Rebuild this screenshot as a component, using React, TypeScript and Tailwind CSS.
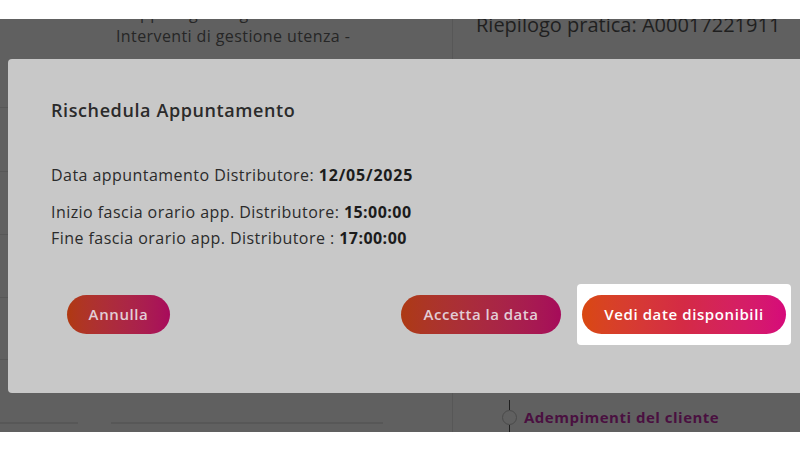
import React from "react";

const font = { fontFamily: "'Open Sans', 'Liberation Sans', sans-serif" };

const App: React.FC = () => {
  return (
    <div className="w-[800px] h-[450px] overflow-hidden bg-white flex flex-col" style={font}>
      {/* top white band */}
      <div className="h-[19px] bg-white shrink-0 relative z-10" />

      {/* dimmed page */}
      <div className="relative h-[413px] bg-[#606060] overflow-hidden flex">
        {/* left column */}
        <div className="w-[453px] shrink-0 border-r border-[#575757] flex flex-col">
          <div className="h-[89px] border-b border-[#575757] pl-[116px]">
            <p className="text-[16px] leading-[20px] -mt-[16px] tracking-[0.4px] text-[#262626]">Mappa ingressi gestione</p>
            <p className="text-[16px] leading-[20px] mt-[3px] tracking-[0.4px] text-[#262626]">Interventi di gestione utenza -</p>
          </div>
          <div className="h-[64px] border-b border-[#575757]" />
          <div className="h-[63px] border-b border-[#575757]" />
          <div className="h-[63px] border-b border-[#575757]" />
          <div className="h-[62px] border-b border-[#575757]" />
          <div className="flex-1 flex items-end pb-[8px]">
            <div className="w-[78px] border-b-2 border-[#575757]" />
            <div className="w-[272px] ml-[33px] border-b-2 border-[#575757]" />
          </div>
        </div>

        {/* right column */}
        <div className="flex-1 flex flex-col pl-[23px]">
          <p className="text-[20px] leading-[26px] -mt-[7px] text-[#1f1f1f] whitespace-nowrap">
            Riepilogo pratica: A00017221911
          </p>
          <div className="flex-1" />
          <div className="flex items-start pl-[26px]">
            <div className="flex flex-col items-center w-[15px] mr-[7px]">
              <div className="w-[1px] h-[10px] bg-[#1f1f1f]" />
              <div className="w-[15px] h-[15px] rounded-full border border-[#4a4a4a]" />
              <div className="w-[1px] h-[7px] bg-[#1f1f1f]" />
            </div>
            <span className="mt-[10px] text-[15px] leading-[15px] font-bold tracking-[0.5px] text-[#4a1040] whitespace-nowrap">
              Adempimenti del cliente
            </span>
          </div>
        </div>

        {/* modal */}
        <div className="absolute left-[8px] top-[40px] w-[802px] h-[334px] bg-[#c8c8c8] rounded-[4px] pl-[43px] pr-[19px] pt-[39px] flex flex-col">
          <h2 className="text-[18px] leading-[24px] font-semibold tracking-[0.6px] text-[#2b2b2b]">Rischedula Appuntamento</h2>
          <p className="mt-[42px] text-[16px] leading-[22px] tracking-[0.45px] text-[#2b2b2b]">
            Data appuntamento Distributore: <b className="font-bold tracking-[0.8px] text-[#1c1c1c]">12/05/2025</b>
          </p>
          <p className="mt-[15px] text-[16px] leading-[22px] tracking-[0.45px] text-[#2b2b2b]">
            Inizio fascia orario app. Distributore: <b className="font-bold text-[#1c1c1c]">15:00:00</b>
          </p>
          <p className="mt-[4px] text-[16px] leading-[22px] tracking-[0.45px] text-[#2b2b2b]">
            Fine fascia orario app. Distributore : <b className="font-bold text-[#1c1c1c]">17:00:00</b>
          </p>

          <div className="mt-[35px] flex items-center">
            <button className="ml-[16px] w-[103px] h-[39px] rounded-full bg-gradient-to-r from-[#b0390f] to-[#a80a5c] text-[15px] font-semibold tracking-[0.6px] text-[#e2cdd6]">
              Annulla
            </button>
            <div className="ml-auto flex items-center">
              <button className="w-[160px] h-[39px] rounded-full bg-gradient-to-r from-[#ad3a12] to-[#a60a5a] text-[15px] font-semibold tracking-[0.5px] text-[#e2cdd6]">
                Accetta la data
              </button>
              <div className="ml-[16px] bg-white rounded-[4px] px-[5px] py-[11px]">
                <button className="w-[204px] h-[39px] rounded-full bg-gradient-to-r from-[#d9480f] via-[#d42a45] to-[#d6097a] text-[15px] font-semibold tracking-[0.6px] text-white">
                  Vedi date disponibili
                </button>
              </div>
            </div>
          </div>
        </div>
      </div>

      {/* bottom white band */}
      <div className="flex-1 bg-white" />
    </div>
  );
};

export default App;
